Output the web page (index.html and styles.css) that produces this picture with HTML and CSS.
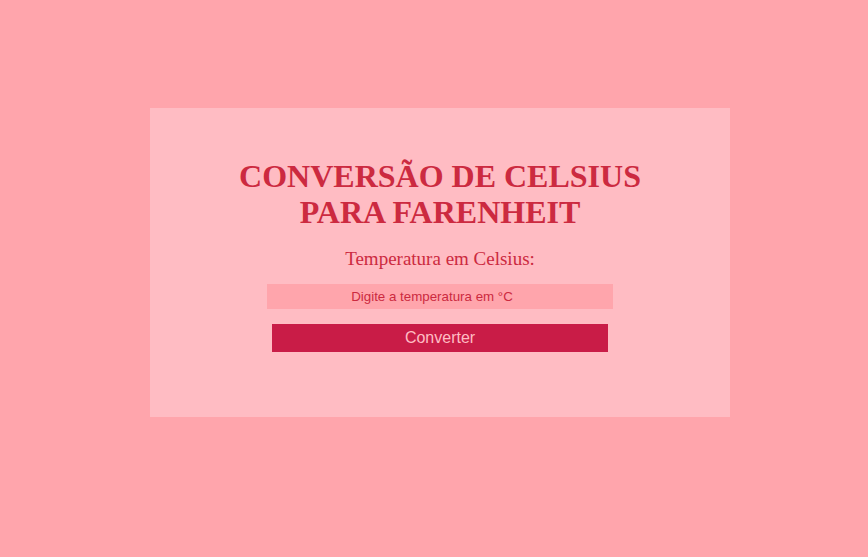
FILE: index.html
```html
<!DOCTYPE html>
<html lang="pt">
<head>
<meta charset="utf-8">
<title>Conversão</title>
<link rel="stylesheet" href="styles.css">
</head>
<body>
<main class="card">
  <h1 class="title">CONVERSÃO DE CELSIUS PARA FARENHEIT</h1>
  <label class="label" for="temp">Temperatura em Celsius:</label>
  <input class="input" id="temp" type="text" placeholder="Digite a temperatura em °C">
  <button class="button" type="button">Converter</button>
</main>
</body>
</html>
```

FILE: styles.css
```css
html, body {
  margin: 0;
  padding: 0;
}
body {
  background: #ffa5ac;
  font-family: "Liberation Serif", "Times New Roman", serif;
  min-height: 557px;
  padding-top: 108px;
  box-sizing: border-box;
}
.card {
  margin-left: 150px;
  width: 580px;
  height: 309px;
  background: #ffbcc3;
  display: flex;
  flex-direction: column;
  align-items: center;
  box-sizing: border-box;
  padding-top: 50px;
}
.title {
  margin: 0;
  width: 420px;
  text-align: center;
  font-size: 32px;
  font-weight: bold;
  color: #cc2a40;
  line-height: 36px;
}
.label {
  margin-top: 18px;
  font-size: 19px;
  color: #cc2a40;
}
.input {
  margin-top: 14px;
  width: 346px;
  height: 25px;
  box-sizing: border-box;
  border: none;
  outline: none;
  background: #ffa5ac;
  text-align: center;
  padding: 0 16px 0 0;
  font-family: "Liberation Sans", Arial, sans-serif;
  font-size: 13.33px;
  color: #cc2a40;
}
.input::placeholder {
  color: #cc2a40;
  opacity: 1;
}
.button {
  margin-top: 15px;
  width: 336px;
  height: 28px;
  border: none;
  background: #c91c47;
  color: #ffbcc3;
  font-family: "Liberation Sans", Arial, sans-serif;
  font-size: 16px;
  padding: 0;
}
```
